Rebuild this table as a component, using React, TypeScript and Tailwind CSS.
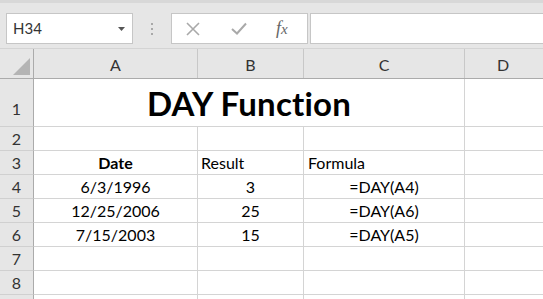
import React from "react";

const cols = [
  { key: "A", width: "w-[164px]" },
  { key: "B", width: "w-[106px]" },
  { key: "C", width: "w-[161px]" },
];

type Row = {
  n: number;
  a?: React.ReactNode;
  b?: React.ReactNode;
  c?: React.ReactNode;
};

const rows: Row[] = [
  { n: 2 },
  { n: 3, a: <span className="font-bold">Date</span>, b: "Result", c: "Formula" },
  { n: 4, a: "6/3/1996", b: "3", c: "=DAY(A4)" },
  { n: 5, a: "12/25/2006", b: "25", c: "=DAY(A6)" },
  { n: 6, a: "7/15/2003", b: "15", c: "=DAY(A5)" },
  { n: 7 },
  { n: 8 },
  { n: 9 },
];

// row 9 is only a sliver at the bottom edge, its number isn't visible
const RowHead: React.FC<{ n: number; tall?: boolean }> = ({ n, tall }) => (
  <div
    className={`w-[34px] shrink-0 bg-[#e6e6e6] border-r border-r-[#ababab] border-b border-b-[#d0d0d0] flex items-center justify-center text-[#333] ${
      tall ? "pt-3" : ""
    }`}
  >
    {n < 9 ? n : null}
  </div>
);

export default function App() {
  return (
    <div
      className="w-[543px] h-[299px] overflow-hidden bg-white text-[16px] text-black"
      style={{ fontFamily: "Lato, 'Open Sans', sans-serif" }}
    >
      {/* toolbar */}
      <div className="h-[48px] bg-[#e6e6e6] border-t-[3px] border-t-[#d8d8d8] flex items-start pt-[10px]">
        <div className="ml-[6px] w-[127px] h-[31px] bg-white border border-[#c6c6c6] flex items-center justify-between pl-[6px] pr-[7px]">
          <span className="text-[15px] text-[#333]">H34</span>
          <svg width="7" height="4" viewBox="0 0 7 4">
            <path d="M0 0 H7 L3.5 4 Z" fill="#555" />
          </svg>
        </div>
        <div className="w-[38px] h-[31px] flex flex-col items-center justify-center gap-[3px]">
          <div className="w-[2px] h-[2px] bg-[#a8a8a8]" />
          <div className="w-[2px] h-[2px] bg-[#a8a8a8]" />
          <div className="w-[2px] h-[2px] bg-[#a8a8a8]" />
        </div>
        <div className="w-[137px] h-[31px] bg-white border border-[#c6c6c6] flex items-center">
          <svg width="14" height="14" viewBox="0 0 14 14" className="ml-[14px]">
            <path d="M1 1 L13 13 M13 1 L1 13" stroke="#a9a9a9" strokeWidth="1.6" />
          </svg>
          <svg width="16" height="13" viewBox="0 0 16 13" className="ml-[31px]">
            <path d="M1 7 L6 11.5 L15 1.5" stroke="#a9a9a9" strokeWidth="2" fill="none" />
          </svg>
          <span
            className="ml-[29px] italic text-[18px] text-[#666]"
            style={{ fontFamily: "'Liberation Serif', serif" }}
          >
            f<span className="text-[15px]">x</span>
          </span>
        </div>
        <div className="ml-[2px] flex-1 h-[31px] bg-white border border-[#c6c6c6] border-r-0" />
      </div>

      {/* column headers */}
      <div className="flex h-[31px] bg-[#e6e6e6] border-b border-b-[#ababab] border-t border-t-[#d4d4d4]">
        <div className="w-[34px] shrink-0 border-r border-r-[#ababab] relative">
          <svg width="17" height="17" viewBox="0 0 17 17" className="absolute right-[3px] bottom-[3px]">
            <path d="M17 0 V17 H0 Z" fill="#b4b4b4" />
          </svg>
        </div>
        {cols.map((c) => (
          <div
            key={c.key}
            className={`${c.width} shrink-0 border-r border-r-[#c8c8c8] flex items-center justify-center text-[#333] pt-[2px]`}
          >
            {c.key}
          </div>
        ))}
        <div className="flex-1 flex items-center justify-center text-[#333] pt-[2px] pr-[2px]">D</div>
      </div>

      {/* row 1, A1:C1 merged */}
      <div className="flex h-[48px]">
        <RowHead n={1} tall />
        <div className="w-[431px] shrink-0 border-r border-r-[#d4d4d4] border-b border-b-[#d4d4d4] flex items-center justify-center pt-[2px]">
          <span className="font-bold text-[33px] tracking-[0.2px]">DAY Function</span>
        </div>
        <div className="flex-1 border-b border-b-[#d4d4d4]" />
      </div>

      {rows.map((r) => (
        <div key={r.n} className="flex h-[24px]">
          <RowHead n={r.n} />
          <div className="w-[164px] shrink-0 border-r border-b border-[#d4d4d4] flex items-center justify-center">
            {r.a}
          </div>
          <div
            className={`w-[106px] shrink-0 border-r border-b border-[#d4d4d4] flex items-center ${
              r.n === 3 ? "justify-start pl-[3px]" : "justify-center"
            }`}
          >
            {r.b}
          </div>
          <div
            className={`w-[161px] shrink-0 border-r border-b border-[#d4d4d4] flex items-center ${
              r.n === 3 ? "justify-start pl-[4px]" : "justify-center"
            }`}
          >
            {r.c}
          </div>
          <div className="flex-1 border-b border-[#d4d4d4]" />
        </div>
      ))}
    </div>
  );
}
